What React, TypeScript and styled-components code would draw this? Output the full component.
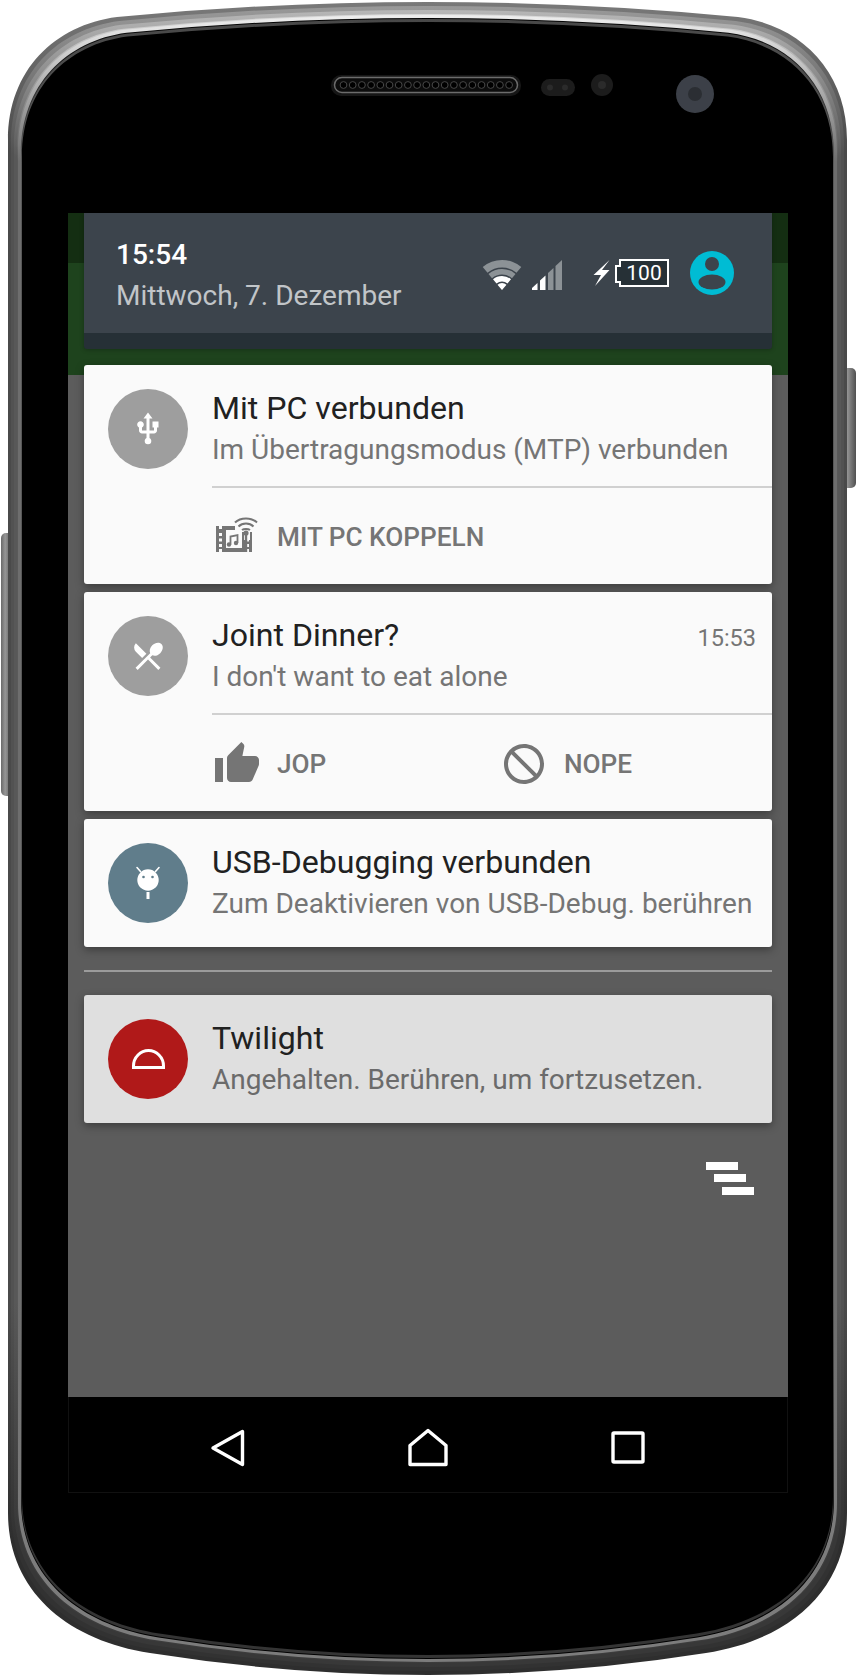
import React from "react";
import styled, { createGlobalStyle } from "styled-components";
import { MdBlock, MdRestaurantMenu, MdThumbUp, MdUsb } from "react-icons/md";

const Global = createGlobalStyle`
  html, body { margin: 0; padding: 0; background: #fff; }
  body { font-family: Roboto, "Liberation Sans", sans-serif; }
`;

const Device = styled.div`
  position: relative;
  width: 856px;
  height: 1676px;
  padding: 213px 68px 0;
  box-sizing: border-box;
  overflow: hidden;
`;
const Body = styled.svg`
  position: absolute;
  left: 0;
  top: 0;
`;
const Screen = styled.div`
  position: relative;
  width: 720px;
  height: 1280px;
  display: flex;
  flex-direction: column;
  background: linear-gradient(#142e12 0 50px, #1e431d 50px 162px, #5c5c5c 162px);
`;
const Shade = styled.div`
  flex: 1;
  display: flex;
  flex-direction: column;
  padding: 0 16px;
`;
const Header = styled.header`
  background: #263036;
  height: 136px;
  border-radius: 0 0 3px 3px;
  box-shadow: 0 1px 4px rgba(0, 0, 0, 0.25);
`;
const HeaderBar = styled.div`
  height: 120px;
  background: #3c444c;
  display: flex;
  justify-content: space-between;
  box-sizing: border-box;
  padding: 0 38px 0 32px;
`;
const Clock = styled.div`
  padding-top: 22px;
`;
const Time = styled.div`
  color: #fff;
  font-size: 28px;
  line-height: 40px;
  font-weight: 500;
`;
const DateLine = styled.div`
  color: #c1c5c8;
  font-size: 28px;
  line-height: 42px;
`;
const StatusIcons = styled.div`
  display: flex;
  align-items: flex-start;
  padding-top: 38px;
`;
const StatusGlyph = styled.svg<{ $left?: number; $top: number }>`
  flex: none;
  margin-left: ${(p) => p.$left ?? 0}px;
  margin-top: ${(p) => p.$top}px;
`;
const Battery = styled.div`
  position: relative;
  width: 50px;
  height: 28px;
  margin: 8px 21px 0 8px;
  box-sizing: border-box;
  border: 2px solid #fff;
  background: #263036;
  color: #fff;
  font-size: 21px;
  line-height: 24px;
  text-align: center;
  &::before {
    content: "";
    position: absolute;
    left: -6px;
    top: 4px;
    width: 4px;
    height: 14px;
    border: 2px solid #fff;
    border-right: 0;
    background: #263036;
  }
`;
const Stack = styled.div`
  display: flex;
  flex-direction: column;
  gap: 8px;
  margin-top: 16px;
`;
const Card = styled.article<{ $muted?: boolean }>`
  background: ${(p) => (p.$muted ? "#dfdfdf" : "#fafafa")};
  border-radius: 3px;
  box-shadow: 0 3px 8px rgba(0, 0, 0, 0.35);
`;
const Main = styled.div<{ $height: number }>`
  height: ${(p) => p.$height}px;
  display: flex;
  box-sizing: border-box;
  padding: 24px 0 0 24px;
`;
const Badge = styled.div<{ $color: string }>`
  width: 80px;
  height: 80px;
  border-radius: 50%;
  background: ${(p) => p.$color};
  color: #fff;
  display: flex;
  align-items: center;
  justify-content: center;
  flex: none;
`;
const Texts = styled.div`
  flex: 1;
  min-width: 0;
  margin: -1px 0 0 24px;
`;
const TitleRow = styled.div`
  display: flex;
  justify-content: space-between;
  align-items: baseline;
  height: 40px;
  padding-right: 16px;
`;
const Title = styled.div`
  color: #212121;
  font-size: 32.1px;
  line-height: 40px;
`;
const When = styled.div`
  color: #757575;
  font-size: 23.5px;
  line-height: 40px;
`;
const Sub = styled.div<{ $dark?: boolean }>`
  color: ${(p) => (p.$dark ? "#6b6b6b" : "#757575")};
  font-size: 28px;
  line-height: 44px;
  white-space: nowrap;
`;
const Actions = styled.div`
  margin-left: 128px;
  padding-left: 1px;
  height: 96px;
  border-top: 2px solid #d0d0d0;
  display: grid;
  grid-template-columns: 287px 1fr;
`;
const Action = styled.div`
  display: flex;
  align-items: center;
  gap: 16px;
  color: #757575;
  font-size: 26.2px;
  font-weight: 500;
  height: 96px;
  box-sizing: border-box;
  padding-top: 2px;
`;
const NopeIcon = styled(MdBlock)`
  transform: scaleX(-1);
`;
const Rule = styled.div`
  height: 2px;
  background: #9b9b9b;
  margin: 23px 0;
`;
const Clear = styled.div`
  display: flex;
  justify-content: flex-end;
  padding: 39px 18px 0 0;
`;
const Nav = styled.nav`
  height: 96px;
  box-sizing: border-box;
  background: #000;
  border: 1px solid #111;
  border-top: 0;
  padding-top: 6px;
  display: grid;
  grid-template-columns: repeat(3, 200px);
  justify-content: center;
  align-items: center;
`;
const NavItem = styled.div`
  display: flex;
  justify-content: center;
  align-items: center;
`;

const OUTLINE =
  "M8 140C8 70 55 25 117 17Q428 -13 738 17C800 25 847 70 847 140L847 1513C847 1590 790 1640 706 1653Q428 1697 150 1653C66 1640 8 1590 8 1513Z";

// inset x, inset y, colour at the top, along the sides, at the bottom
const layers: [number, number, string, string, string][] = [
  [0, 0, "#7a7a7a", "#4a4a4a", "#2e2e2e"],
  [3, 4, "#9a9a9a", "#525252", "#323232"],
  [6, 8, "#b8b8b8", "#585858", "#383838"],
  [9, 12, "#dcdcdc", "#5a5a5a", "#3c3c3c"],
  [10, 13, "#f0f0f0", "#6e6e6e", "#7c7c7c"],
  [13, 16, "#000000", "#5a5a5a", "#000000"],
  [13.5, 17, "#484848", "#555555", "#343434"],
  [14, 20, "#000000", "#000000", "#000000"],
];

function PhoneBody() {
  return (
    <Body width={856} height={1676} viewBox="0 0 856 1676">
      <defs>
        <linearGradient id="key" x1="0" x2="1" y1="0" y2="0">
          <stop offset="0" stopColor="#6a6a6a" />
          <stop offset="0.35" stopColor="#969696" />
          <stop offset="1" stopColor="#505050" />
        </linearGradient>
        {layers.map(([, , a, b, c], i) => (
          <linearGradient key={i} id={`shell${i}`} gradientUnits="userSpaceOnUse" x1="0" x2="0" y1="0" y2="1676">
            <stop offset="0" stopColor={a} />
            <stop offset="0.09" stopColor={b} />
            <stop offset="0.78" stopColor={b} />
            <stop offset="0.92" stopColor={c} />
            <stop offset="1" stopColor={c} />
          </linearGradient>
        ))}
      </defs>
      <rect x="1" y="533" width="12" height="263" rx="5" fill="url(#key)" />
      <rect x="842" y="368" width="14" height="120" rx="5" fill="url(#key)" />
      {layers.map(([dx, dy], i) => (
        <path
          key={i}
          d={OUTLINE}
          fill={`url(#shell${i})`}
          transform={`translate(427.5 838) scale(${(839 - 2 * dx) / 839} ${(1674 - 2 * dy) / 1674}) translate(-427.5 -838)`}
        />
      ))}
      <rect x="331" y="75" width="190" height="21" rx="10" fill="#161616" />
      <rect x="334.5" y="77.5" width="183" height="15" rx="7.5" fill="#0c0c0c" stroke="#6c6c6c" strokeWidth="1.5" />
      {Array.from({ length: 19 }, (_, i) => (
        <circle key={i} cx={343.5 + i * 9.2} cy={85} r={3.4} fill="#000" stroke="#484848" strokeWidth="1" />
      ))}
      <rect x="541" y="79" width="34" height="17" rx="8.5" fill="#1c1c1c" />
      <circle cx="550" cy="87.5" r="3" fill="#2b2b2b" />
      <circle cx="565" cy="87.5" r="3" fill="#2b2b2b" />
      <circle cx="602" cy="85" r="11" fill="#1c1c1c" />
      <circle cx="602" cy="85" r="4" fill="#2b2b2b" />
      <circle cx="695" cy="94" r="19" fill="#3c4048" />
      <circle cx="695" cy="94" r="7" fill="#2b2e33" />
    </Body>
  );
}

const wifiBand = (outer: number, inner: number) => {
  const sx = 0.643;
  const cy = 0.766;
  const ox = (r: number, sign: number) => (20 + sign * sx * r).toFixed(2);
  const oy = (r: number) => (31 - cy * r).toFixed(2);
  return `M${ox(outer, -1)} ${oy(outer)}A${outer} ${outer} 0 0 1 ${ox(outer, 1)} ${oy(outer)}L${ox(inner, 1)} ${oy(inner)}A${inner} ${inner} 0 0 0 ${ox(inner, -1)} ${oy(inner)}Z`;
};

const Wifi = () => (
  <StatusGlyph $top={8} width="40" height="32" viewBox="0 0 40 32">
    <path d={wifiBand(30, 22.5)} fill="#8c9296" />
    <path d={wifiBand(21, 15.5)} fill="#8c9296" />
    <path d={wifiBand(14, 8.5)} fill="#fff" />
    <path d={wifiBand(7, 0.1)} fill="#fff" />
  </StatusGlyph>
);
const Signal = () => (
  <StatusGlyph $left={10} $top={8} width="30" height="32" viewBox="0 0 30 32">
    <path d="M23.5 7L30 1V31H23.5Z" fill="#8c9296" />
    <path d="M16 14L21.5 9V31H16Z" fill="#8c9296" />
    <path d="M8 21.5L13.5 16.5V31H8Z" fill="#fff" />
    <path d="M0 29L5.5 24V31H0Z" fill="#fff" />
  </StatusGlyph>
);
const Bolt = () => (
  <StatusGlyph $left={31} $top={8} width="18" height="28" viewBox="0 0 18 28">
    <path d="M16.5 1L0.5 16H8L2 27L16.5 11H9Z" fill="#fff" />
  </StatusGlyph>
);
const Avatar = () => (
  <svg width="44" height="44" viewBox="0 0 44 44">
    <circle cx="22" cy="22" r="22" fill="#00bcd4" />
    <circle cx="22" cy="13" r="7" fill="#3c444c" />
    <ellipse cx="22" cy="31" rx="13.5" ry="7.5" fill="#3c444c" />
  </svg>
);
const Android = () => (
  <svg width="36" height="36" viewBox="0 0 36 36">
    <path d="M7 2.5L10.5 6.5M29 2.5L25.5 6.5" stroke="#fff" strokeWidth="1.6" strokeLinecap="round" />
    <circle cx="18" cy="15" r="10.7" fill="#fff" />
    <circle cx="13.5" cy="12" r="1.3" fill="#607d8b" />
    <circle cx="22.5" cy="12" r="1.3" fill="#607d8b" />
    <rect x="16.5" y="27" width="3" height="7" fill="#fff" />
  </svg>
);
const Dome = () => (
  <svg width="36" height="24" viewBox="0 0 36 24">
    <path d="M3.5 20.5H33.5V19C33.5 10.5 26.5 3.5 18.5 3.5C10.5 3.5 3.5 10.5 3.5 19Z" fill="none" stroke="#fff" strokeWidth="3" />
  </svg>
);
const Cast = () => (
  <svg width="48" height="48" viewBox="0 0 48 48">
    <path d="M3 13h36v26H3z" fill="#757575" />
    <path
      d="M6 13h3v3H6zM33 13h3v3h-3zM6 36h3v3H6zM33 36h3v3h-3zM6 20h3v3H6zM6 25.5h3v3H6zM6 31h3v3H6zM33 25.5h3v3h-3zM33 31h3v3h-3z"
      fill="#fafafa"
    />
    <path d="M13 17h16v18H13z" fill="#fafafa" />
    <path d="M17.5 31.5V23.5l7-1.5v8" fill="none" stroke="#757575" strokeWidth="1.8" />
    <circle cx="16" cy="31.5" r="2.2" fill="#757575" />
    <circle cx="23" cy="30" r="2.2" fill="#757575" />
    <path d="M22 3h25v16h-10v8h-6v-8h-9z" fill="#fafafa" />
    <path d="M22 9.5C27.500 4 38.500 4 44 9.5M25.500 13.500C29.500 9.500 36.500 9.500 40.500 13.500M29 17C31 15.500 35 15.500 37 17" fill="none" stroke="#757575" strokeWidth="2" />
    <circle cx="33" cy="20" r="2.600" fill="#757575" />
    <path d="M33 21V39" stroke="#757575" strokeWidth="2.400" />
  </svg>
);
const ClearAll = () => (
  <svg width="48" height="33" viewBox="0 0 48 33">
    <path d="M0 0h32v8H0zM8 12h32v8H8zM16 25h32v8H16z" fill="#fff" />
  </svg>
);
const Back = () => (
  <svg width="40" height="44" viewBox="0 0 40 44">
    <path d="M34.5 5.5V38.5L5 22Z" fill="none" stroke="#fff" strokeWidth="3.4" strokeLinejoin="round" />
  </svg>
);
const Home = () => (
  <svg width="44" height="44" viewBox="0 0 44 44">
    <path d="M4 19.5L22 4.5L40 19.5V38.5H4Z" fill="none" stroke="#fff" strokeWidth="3.4" strokeLinejoin="round" />
  </svg>
);
const Recents = () => (
  <svg width="40" height="40" viewBox="0 0 40 40">
    <rect x="5" y="5" width="30" height="29" rx="1" fill="none" stroke="#fff" strokeWidth="3.4" />
  </svg>
);

export default function App() {
  return (
    <>
      <Global />
      <Device>
        <PhoneBody />
        <Screen>
          <Shade>
            <Header>
              <HeaderBar>
                <Clock>
                  <Time>15:54</Time>
                  <DateLine>Mittwoch, 7. Dezember</DateLine>
                </Clock>
                <StatusIcons>
                  <Wifi />
                  <Signal />
                  <Bolt />
                  <Battery>100</Battery>
                  <Avatar />
                </StatusIcons>
              </HeaderBar>
            </Header>
            <Stack>
              <Card>
                <Main $height={121}>
                  <Badge $color="#9e9e9e">
                    <MdUsb size={36} />
                  </Badge>
                  <Texts>
                    <Title>Mit PC verbunden</Title>
                    <Sub>Im Übertragungsmodus (MTP) verbunden</Sub>
                  </Texts>
                </Main>
                <Actions>
                  <Action>
                    <Cast />
                    MIT PC KOPPELN
                  </Action>
                </Actions>
              </Card>
              <Card>
                <Main $height={121}>
                  <Badge $color="#9e9e9e">
                    <MdRestaurantMenu size={36} />
                  </Badge>
                  <Texts>
                    <TitleRow>
                      <Title>Joint Dinner?</Title>
                      <When>15:53</When>
                    </TitleRow>
                    <Sub>I don't want to eat alone</Sub>
                  </Texts>
                </Main>
                <Actions>
                  <Action>
                    <MdThumbUp size={48} color="#757575" />
                    JOP
                  </Action>
                  <Action>
                    <NopeIcon size={48} color="#757575" />
                    NOPE
                  </Action>
                </Actions>
              </Card>
              <Card>
                <Main $height={128}>
                  <Badge $color="#607d8b">
                    <Android />
                  </Badge>
                  <Texts>
                    <Title>USB-Debugging verbunden</Title>
                    <Sub>Zum Deaktivieren von USB-Debug. berühren</Sub>
                  </Texts>
                </Main>
              </Card>
            </Stack>
            <Rule />
            <Card $muted>
              <Main $height={128}>
                <Badge $color="#b01919">
                  <Dome />
                </Badge>
                <Texts>
                  <Title>Twilight</Title>
                  <Sub $dark>Angehalten. Berühren, um fortzusetzen.</Sub>
                </Texts>
              </Main>
            </Card>
            <Clear>
              <ClearAll />
            </Clear>
          </Shade>
          <Nav>
            <NavItem>
              <Back />
            </NavItem>
            <NavItem>
              <Home />
            </NavItem>
            <NavItem>
              <Recents />
            </NavItem>
          </Nav>
        </Screen>
      </Device>
    </>
  );
}
